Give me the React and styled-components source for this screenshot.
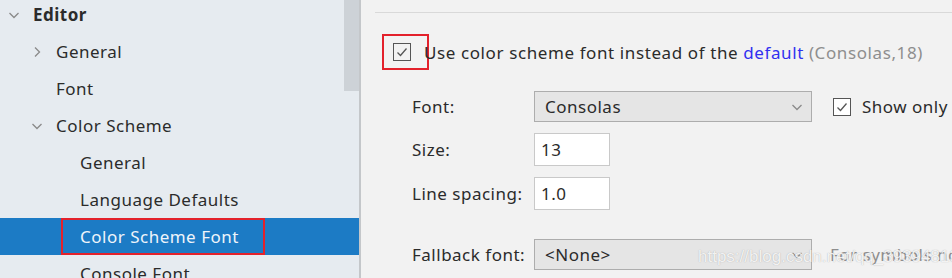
import React from 'react';
import styled, { createGlobalStyle } from 'styled-components';

const GlobalStyle = createGlobalStyle`
  html, body {
    margin: 0;
    padding: 0;
    background: #f2f2f2;
  }
  body {
    font-family: "Noto Sans", "Open Sans", sans-serif;
    letter-spacing: 0.5px;
  }
`;

const Window = styled.div`
  display: flex;
  width: 952px;
  height: 278px;
  overflow: hidden;
  position: relative;
`;

const Sidebar = styled.div`
  position: relative;
  width: 359px;
  flex-shrink: 0;
  background: #e6ebf0;
`;

const Tree = styled.div`
  margin-top: -4px;
`;

const Row = styled.div`
  position: relative;
  display: flex;
  align-items: center;
  height: 37px;
  padding-left: ${p => p.indent}px;
  background: ${p => (p.selected ? '#1c7bc5' : 'transparent')};
  color: ${p => (p.selected ? '#eef4fa' : '#2b2b2b')};
  font-size: 17px;
  font-weight: ${p => (p.bold ? 700 : 400)};
`;

const Arrow = styled.span`
  display: flex;
  align-items: center;
  width: 25px;
`;

const SelectBox = styled.div`
  position: absolute;
  left: 61px;
  top: 0;
  width: 200px;
  height: 33px;
  border: 2px solid #e3212b;
`;

const Thumb = styled.div`
  position: absolute;
  top: 0;
  right: 0;
  width: 15px;
  height: 91px;
  background: #cdd2d7;
`;

const Divider = styled.div`
  width: 2px;
  flex-shrink: 0;
  background: #c4c7ca;
`;

const Panel = styled.div`
  flex: 1;
  background: #f2f2f2;
  padding-left: 14px;
  padding-top: 12px;
  color: #2b2b2b;
  font-size: 17px;
`;

const Separator = styled.div`
  height: 1px;
  background: #d9d9d9;
`;

const OptionRow = styled.div`
  display: flex;
  align-items: center;
  margin-top: 21px;
  margin-left: 7px;
  height: 36px;
  white-space: nowrap;
  letter-spacing: 0.6px;
`;

const RedFrame = styled.div`
  display: flex;
  align-items: center;
  box-sizing: border-box;
  width: 47px;
  height: 36px;
  padding-left: 9px;
  margin-right: -5px;
  border: 2px solid #e3212b;
`;

const Check = styled.span`
  display: flex;
  align-items: center;
  justify-content: center;
  box-sizing: border-box;
  width: 18px;
  height: 18px;
  border: 1.5px solid #555;
  background: ${p => (p.white ? '#fff' : 'transparent')};
  flex-shrink: 0;
`;

const Link = styled.span`
  color: #3030f0;
`;

const Hint = styled.span`
  color: #8e8e8e;
`;

const Form = styled.div`
  display: grid;
  grid-template-columns: 122px auto;
  align-items: center;
  margin-top: 21px;
  margin-left: 37px;
  row-gap: 11px;
`;

const Label = styled.div`
  white-space: nowrap;
  margin-top: ${p => p.top || 0}px;
`;

const Line = styled.div`
  display: flex;
  align-items: center;
  margin-top: ${p => p.top || 0}px;
`;

const Dropdown = styled.div`
  display: flex;
  align-items: center;
  justify-content: space-between;
  box-sizing: border-box;
  width: 278px;
  height: 31px;
  padding: 0 8px 0 10px;
  background: #e5e5e5;
  border: 1px solid #adadad;
`;

const Input = styled.div`
  display: flex;
  align-items: center;
  box-sizing: border-box;
  width: 76px;
  height: 33px;
  padding-left: 6px;
  background: #fff;
  border: 1px solid #c9c9c9;
`;

const SideCheck = styled.label`
  display: flex;
  align-items: center;
  gap: 11px;
  margin-left: 21px;
  white-space: nowrap;
`;

const Muted = styled.span`
  margin-left: 18px;
  color: #8e8e8e;
  white-space: nowrap;
`;

const Watermark = styled.div`
  position: absolute;
  left: 698px;
  top: 247px;
  font-family: "Liberation Sans", sans-serif;
  font-size: 17px;
  letter-spacing: 0;
  color: rgba(255, 255, 255, 0.85);
  text-shadow: 0 0 1px rgba(120, 120, 120, 0.6);
  white-space: nowrap;
`;

const Chevron = ({ dir }) => (
  <svg width="12" height="12" viewBox="0 0 12 12">
    <path
      d={dir === 'down' ? 'M1.5 4 L6 8.5 L10.5 4' : 'M4 1.5 L8.5 6 L4 10.5'}
      fill="none"
      stroke="#8a8a8a"
      strokeWidth="1.3"
    />
  </svg>
);

const Tick = () => (
  <svg width="14" height="14" viewBox="0 0 14 14">
    <path d="M2.5 7.5 L5.5 10.5 L11.5 3.5" fill="none" stroke="#555" strokeWidth="1.3" />
  </svg>
);

const items = [
  { label: 'Editor', indent: 8, arrow: 'down', bold: true },
  { label: 'General', indent: 31, arrow: 'right' },
  { label: 'Font', indent: 56 },
  { label: 'Color Scheme', indent: 31, arrow: 'down' },
  { label: 'General', indent: 80 },
  { label: 'Language Defaults', indent: 80 },
  { label: 'Color Scheme Font', indent: 80, selected: true },
  { label: 'Console Font', indent: 80 },
];

export default function App() {
  return (
    <Window>
      <GlobalStyle />
      <Sidebar>
        <Tree>
          {items.map((it, i) => (
            <Row key={i} indent={it.indent} selected={it.selected} bold={it.bold}>
              {it.arrow && (
                <Arrow>
                  <Chevron dir={it.arrow} />
                </Arrow>
              )}
              {it.label}
              {it.selected && <SelectBox />}
            </Row>
          ))}
        </Tree>
        <Thumb />
      </Sidebar>
      <Divider />
      <Panel>
        <Separator />
        <OptionRow>
          <RedFrame>
            <Check>
              <Tick />
            </Check>
          </RedFrame>
          <span>
            Use color scheme font instead of the <Link>default</Link> <Hint>(Consolas,18)</Hint>
          </span>
        </OptionRow>
        <Form>
          <Label>Font:</Label>
          <Line>
            <Dropdown>
              Consolas
              <Chevron dir="down" />
            </Dropdown>
            <SideCheck>
              <Check white>
                <Tick />
              </Check>
              Show only monospaced fonts
            </SideCheck>
          </Line>
          <Label>Size:</Label>
          <Input>13</Input>
          <Label>Line spacing:</Label>
          <Input>1.0</Input>
          <Label top={18}>Fallback font:</Label>
          <Line top={18}>
            <Dropdown>
              &lt;None&gt;
              <Chevron dir="down" />
            </Dropdown>
            <Muted>For symbols not supported by the font</Muted>
          </Line>
        </Form>
      </Panel>
      <Watermark>https://blog.csdn.net/qq_39394813</Watermark>
    </Window>
  );
}
